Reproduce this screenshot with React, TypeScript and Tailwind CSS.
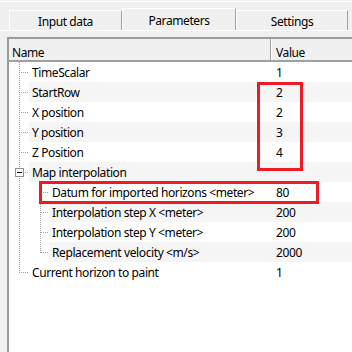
type Row = {
    label: string;
    value: string;
    level: 1 | 2;
    kind?: "group" | "last" | "lastChild";
};

const ROWS: Row[] = [
    { label: "TimeScalar", value: "1", level: 1 },
    { label: "StartRow", value: "2", level: 1 },
    { label: "X position", value: "2", level: 1 },
    { label: "Y position", value: "3", level: 1 },
    { label: "Z Position", value: "4", level: 1 },
    { label: "Map interpolation", value: "", level: 1, kind: "group" },
    { label: "Datum for imported horizons <meter>", value: "80", level: 2 },
    { label: "Interpolation step X <meter>", value: "200", level: 2 },
    { label: "Interpolation step Y <meter>", value: "200", level: 2 },
    { label: "Replacement velocity <m/s>", value: "2000", level: 2, kind: "lastChild" },
    { label: "Current horizon to paint", value: "1", level: 1, kind: "last" },
];

const DOT = "#a0a0a0";

function TreeLines({ row }: { row: Row }) {
    if (row.level === 2) {
        return (
            <svg width="40" height="20" className="shrink-0">
                <line x1="10.5" y1="0" x2="10.5" y2="20" stroke={DOT} strokeDasharray="1 1" />
                <line x1="31.5" y1="0" x2="31.5" y2={row.kind === "lastChild" ? 11 : 20} stroke={DOT} strokeDasharray="1 1" />
                <line x1="32" y1="10.5" x2="40" y2="10.5" stroke={DOT} strokeDasharray="1 1" />
            </svg>
        );
    }
    return (
        <svg width="20" height="20" className="shrink-0">
            <line x1="10.5" y1="0" x2="10.5" y2={row.kind === "last" ? 11 : 20} stroke={DOT} strokeDasharray="1 1" />
            <line x1="12" y1="10.5" x2="20" y2="10.5" stroke={DOT} strokeDasharray="1 1" />
            {row.kind === "group" && (
                <>
                    <rect x="6.5" y="6.5" width="8" height="8" fill="#fff" stroke="#919191" />
                    <line x1="8" y1="10.5" x2="13" y2="10.5" stroke="#000" />
                </>
            )}
        </svg>
    );
}

function Tab({ label, active, w }: { label: string; active?: boolean; w: string }) {
    return (
        <div
            className={`${w} ${active ? "h-[22px]" : "h-[20px]"} flex items-center justify-center pt-[3px] bg-[#f0f0f0] border-t border-l border-white border-r border-r-[#a0a0a0] text-[12px] text-black`}
        >
            {label}
        </div>
    );
}

export default function App() {
    return (
        <div
            className="relative w-[352px] h-[352px] overflow-hidden bg-[#f0f0f0] flex flex-col tracking-[-0.4px]"
            style={{ fontFamily: '"Noto Sans", "Open Sans", sans-serif' }}
        >
            <div className="h-[2px] border-b border-white shrink-0" />
            <div className="flex items-end pl-[9px] h-[28px] shrink-0">
                <Tab label="Input data" w="w-[113px]" />
                <Tab label="Parameters" w="w-[114px]" active />
                <Tab label="Settings" w="w-[112px]" />
            </div>
            <div className="h-[7px] border-t border-white shrink-0" />
            <div className="ml-[7px] flex-1 bg-white border-t-2 border-l-2 border-[#9b9b9b] flex flex-col text-[12px] text-black">
                <div className="flex h-[23px] bg-[#f0f0f0] border-b-2 border-[#a0a0a0] shrink-0">
                    <div className="w-[262px] pl-[3px] pt-[6px] flex items-center border-r border-[#a0a0a0]">Name</div>
                    <div className="flex-1 pl-[4px] pt-[6px] flex items-center border-l border-white">Value</div>
                </div>
                {ROWS.map((row, i) => (
                    <div key={row.label} className="flex h-[20px] items-stretch">
                        <TreeLines row={row} />
                        <div className={`flex flex-1 items-center pt-[2px] ${i % 2 === 1 ? "bg-[#f5f5f5]" : "bg-white"}`}>
                            <div className={`${row.level === 2 ? "w-[222px]" : "w-[242px]"} pl-[3px] whitespace-nowrap`}>
                                {row.label}
                            </div>
                            <div className="flex-1 pl-[5px]">{row.value}</div>
                        </div>
                    </div>
                ))}
            </div>

            {/* annotation boxes */}
            <div className="absolute left-[257px] top-[82px] w-[46px] h-[89px] border-[3px] border-[#ed1c24]" />
            <div className="absolute left-[39px] top-[181px] w-[280px] h-[23px] border-[3px] border-[#ed1c24]" />
        </div>
    );
}
